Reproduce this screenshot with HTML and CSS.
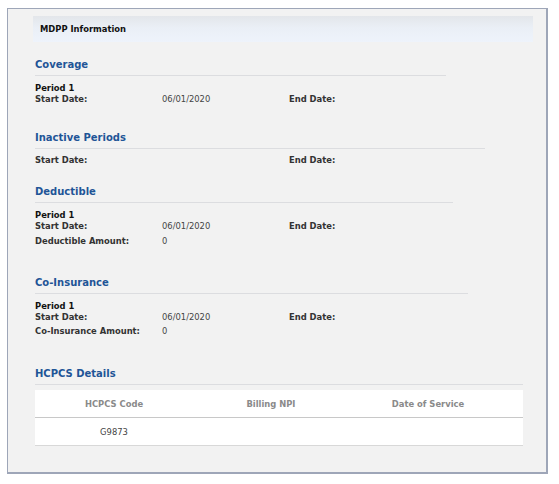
FILE: index.html
```html
<!DOCTYPE html>
<html>
<head>
<meta charset="utf-8">
<link rel="stylesheet" href="styles.css">
</head>
<body>
<div class="panel">
  <div class="titlebar">MDPP Information</div>

  <section class="sec sec-coverage">
    <h2 class="heading">Coverage</h2>
    <div class="rule r-446"></div>
    <div class="period">Period 1</div>
    <div class="row"><span class="lbl">Start Date:</span><span class="val">06/01/2020</span><span class="lbl2">End Date:</span></div>
  </section>

  <section class="sec sec-inactive">
    <h2 class="heading">Inactive Periods</h2>
    <div class="rule r-485"></div>
    <div class="row first"><span class="lbl">Start Date:</span><span class="val"></span><span class="lbl2">End Date:</span></div>
  </section>

  <section class="sec sec-deduct">
    <h2 class="heading">Deductible</h2>
    <div class="rule r-453"></div>
    <div class="period">Period 1</div>
    <div class="row"><span class="lbl">Start Date:</span><span class="val">06/01/2020</span><span class="lbl2">End Date:</span></div>
    <div class="row amt"><span class="lbl">Deductible Amount:</span><span class="val">0</span></div>
  </section>

  <section class="sec sec-coins">
    <h2 class="heading">Co-Insurance</h2>
    <div class="rule r-468"></div>
    <div class="period">Period 1</div>
    <div class="row"><span class="lbl">Start Date:</span><span class="val">06/01/2020</span><span class="lbl2">End Date:</span></div>
    <div class="row amt2"><span class="lbl">Co-Insurance Amount:</span><span class="val">0</span></div>
  </section>

  <section class="sec sec-hcpcs">
    <h2 class="heading">HCPCS Details</h2>
    <div class="rule r-full"></div>
    <table class="grid">
      <colgroup><col class="c1"><col class="c2"><col class="c3"></colgroup>
      <thead>
        <tr><th>HCPCS Code</th><th>Billing NPI</th><th class="last">Date of Service</th></tr>
      </thead>
      <tbody>
        <tr><td>G9873</td><td></td><td class="last"></td></tr>
      </tbody>
    </table>
  </section>
</div>
</body>
</html>
```

FILE: styles.css
```css
html, body {
  margin: 0;
  padding: 0;
  background: #ffffff;
}
body {
  font-family: "DejaVu Sans", Verdana, sans-serif;
  font-size: 8.4px;
  color: #222;
}
.panel {
  margin: 8px 0 0 7px;
  width: 541px;
  height: 466px;
  box-sizing: border-box;
  border: 1px solid #9ea6b8;
  border-right-width: 2px;
  border-bottom-width: 2px;
  background: #f2f2f2;
  padding: 7px 0 0 27px;
}
.titlebar {
  width: 500px;
  height: 26px;
  margin-left: -2px;
  box-sizing: border-box;
  padding-left: 7px;
  line-height: 26px;
  font-weight: bold;
  color: #111;
  background: linear-gradient(to bottom, #e3e6ea 0%, #eaeff6 45%, #eef3fb 100%);
}
.sec {
  margin: 0;
}
.heading {
  margin: 0;
  font-size: 10px;
  font-weight: bold;
  color: #1f5597;
  line-height: 14px;
}
.rule {
  height: 1px;
  background: #dcdde0;
  margin-top: 3px;
}
.r-446 { width: 411px; }
.r-485 { width: 450px; }
.r-453 { width: 418px; }
.r-468 { width: 433px; }
.r-full { width: 488px; }
.period {
  font-weight: bold;
  color: #111;
  margin-top: 7px;
  line-height: 11px;
}
.row {
  display: flex;
  line-height: 11px;
  height: 11px;
}
.row.first { margin-top: 6px; }
.row.amt { margin-top: 4px; }
.row.amt2 { margin-top: 3px; }
.lbl, .lbl2 {
  font-weight: bold;
  color: #333;
}
.lbl { width: 127px; flex: none; }
.val { width: 127px; flex: none; color: #444; }
.sec-coverage { margin-top: 16px; }
.sec-inactive { margin-top: 26px; }
.sec-deduct { margin-top: 19px; }
.sec-coins { margin-top: 29px; }
.sec-hcpcs { margin-top: 30px; }
.grid {
  margin-top: 5px;
  width: 488px;
  border-collapse: collapse;
  background: #fff;
  table-layout: fixed;
}
.c1 { width: 158px; }
.c2 { width: 156px; }
.c3 { width: 174px; }
.grid th {
  font-weight: bold;
  color: #8a8a8a;
  height: 27px;
  border-bottom: 1px solid #c8c8c8;
  padding: 0;
}
.grid td {
  color: #444;
  text-align: center;
  height: 27px;
  padding: 0;
  border-bottom: 1px solid #d8d8d8;
}
.grid .last { padding-right: 16px; }
```
